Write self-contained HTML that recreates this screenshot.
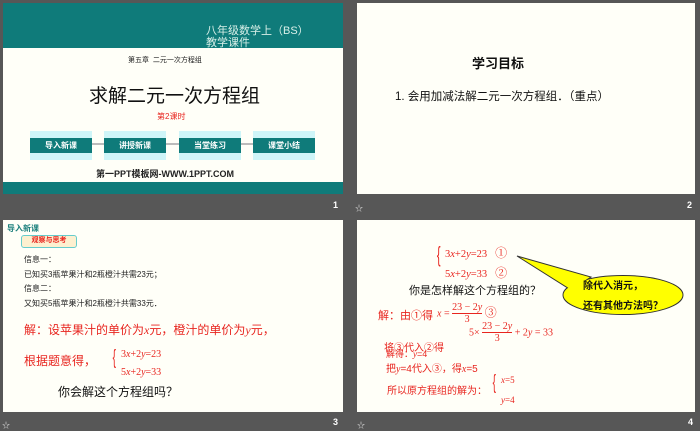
<!DOCTYPE html>
<html><head><meta charset="utf-8"><style>
*{margin:0;padding:0;box-sizing:border-box}
body{width:700px;height:429px;background:#575757;position:relative;overflow:hidden;font-family:"Liberation Sans","Noto Sans CJK SC",sans-serif}
.s{position:absolute;background:#fffff8;overflow:hidden}
.a{position:absolute;white-space:nowrap}
.n{position:absolute;color:#fff;font-size:9px;font-weight:bold}
.st{position:absolute;color:#ddd;font-size:8px}
.btn{position:absolute;top:128px;height:29px;width:62px;background:#cff5f8}
.btn div{position:absolute;left:0;right:0;top:7px;height:15px;background:#0f7b7a;color:#fff;font-size:8px;font-weight:bold;text-align:center;line-height:15px}
.red{color:#e8251f}
.m{font-family:"Liberation Serif","Noto Serif CJK SC",serif}
</style></head><body>
<!-- slide1 -->
<div class="s" style="left:3px;top:3px;width:340px;height:191px">
 <div style="position:absolute;left:0;top:0;width:340px;height:45px;background:#0f7b7a"></div>
 <div class="a" style="left:203px;top:22px;font-size:11px;line-height:12px;color:#d8efe8">八年级数学上（BS）<br>教学课件</div>
 <div class="a" style="left:125px;top:52px;font-size:7px;color:#222">第五章&nbsp; 二元一次方程组</div>
 <div class="a" style="left:86px;top:78px;font-size:19px;color:#111">求解二元一次方程组</div>
 <div class="a red" style="left:154px;top:108px;font-size:8px">第2课时</div>
 <div style="position:absolute;left:80px;top:140px;width:200px;height:2px;background:#bbb"></div>
 <div class="btn" style="left:27px"><div>导入新课</div></div>
 <div class="btn" style="left:101px"><div>讲授新课</div></div>
 <div class="btn" style="left:176px"><div>当堂练习</div></div>
 <div class="btn" style="left:250px"><div>课堂小结</div></div>
 <div class="a" style="left:93px;top:164px;font-size:9px;font-weight:bold;color:#222">第一PPT模板网-WWW.1PPT.COM</div>
 <div style="position:absolute;left:0;top:179px;width:340px;height:12px;background:#0f7b7a"></div>
</div>
<div class="n" style="left:333px;top:200px">1</div>
<!-- slide2 -->
<div class="s" style="left:357px;top:3px;width:338px;height:191px">
 <div class="a" style="left:115px;top:50px;font-size:13px;font-weight:bold;color:#111">学习目标</div>
 <div class="a" style="left:38px;top:85px;font-size:11.5px;color:#111">1. 会用加减法解二元一次方程组．（重点）</div>
</div>
<div class="st" style="left:355px;top:203px">☆</div>
<div class="n" style="left:687px;top:200px">2</div>
<!-- slide3 -->
<div class="s" style="left:3px;top:220px;width:340px;height:192px">
 <div class="a" style="left:4px;top:3px;font-size:8px;font-weight:bold;color:#1a7f7c">导入新课</div>
 <div class="a" style="left:18px;top:15px;width:56px;height:13px;border:1.5px solid #6cc;border-radius:3px;background:#fdf0d0;font-size:7px;font-weight:bold;color:#e8251f;text-align:center;line-height:10px">观察与思考</div>
 <div class="a" style="left:21px;top:33px;font-size:8px;line-height:14.5px;color:#222">信息一：<br>已知买3瓶苹果汁和2瓶橙汁共需23元；<br>信息二：<br>又知买5瓶苹果汁和2瓶橙汁共需33元．</div>
 <div class="a red" style="left:21px;top:101px;font-size:12px">解：设苹果汁的单价为<i class="m">x</i>元，橙汁的单价为<i class="m">y</i>元，</div>
 <div class="a red" style="left:21px;top:132px;font-size:12px">根据题意得，</div>
 <div class="a red" style="left:108px;top:127px;font-size:20px;font-weight:100;transform:scaleX(.5)">{</div>
 <div class="a red m" style="left:118px;top:126px;font-size:10px;line-height:18px">3<i>x</i>+2<i>y</i>=23<br>5<i>x</i>+2<i>y</i>=33</div>
 <div class="a" style="left:55px;top:163px;font-size:12px;color:#111">你会解这个方程组吗？</div>
</div>
<div class="st" style="left:2px;top:420px">☆</div>
<div class="n" style="left:333px;top:417px">3</div>
<!-- slide4 -->
<div class="s" style="left:357px;top:220px;width:338px;height:192px">
 <div class="a red" style="left:78px;top:22px;font-size:22px;transform:scaleX(.5)">{</div>
 <div class="a red m" style="left:88px;top:24px;font-size:10.5px;line-height:19px">3<i>x</i>+2<i>y</i>=23&nbsp;&nbsp;&nbsp;<span style="font-size:12px">①</span><br>5<i>x</i>+2<i>y</i>=33&nbsp;&nbsp;&nbsp;<span style="font-size:12px">②</span></div>
 <svg style="position:absolute;left:0;top:0" width="338" height="192">
  <ellipse cx="266" cy="75" rx="60" ry="19.5" fill="#ffff00" stroke="#333" stroke-width="1"/>
  <path d="M160 36 L234 57 L214 70 Z" fill="#ffff00" stroke="#333" stroke-width="1"/>
  <ellipse cx="266" cy="75" rx="59.3" ry="18.8" fill="#ffff00"/>
 </svg>
 <div class="a" style="left:226px;top:57px;font-size:10px;font-weight:bold;line-height:20px;color:#111">除代入消元，<br>还有其他方法吗？</div>
 <div class="a" style="left:52px;top:62px;font-size:11px;color:#111">你是怎样解这个方程组的？</div>
 <div class="a red" style="left:21px;top:87px;font-size:11px">解：由①得</div>
 <div class="a red m" style="left:80px;top:82px;font-size:10px"><i>x</i> = <span style="display:inline-block;text-align:center;vertical-align:middle;line-height:12px"><span style="border-bottom:1px solid #e8251f">23 − 2<i>y</i></span><br>3</span> <span style="font-size:12px">③</span></div>
 <div class="a red m" style="left:112px;top:101px;font-size:10px">5× <span style="display:inline-block;text-align:center;vertical-align:middle;line-height:12px"><span style="border-bottom:1px solid #e8251f">23 − 2<i>y</i></span><br>3</span> + 2<i>y</i> = 33</div>
 <div class="a red" style="left:27px;top:119px;font-size:10px">将③代入②得</div>
 <div class="a red" style="left:29px;top:127px;font-size:9px">解得：<i class="m">y</i>=4</div>
 <div class="a red" style="left:29px;top:140px;font-size:10px">把<i class="m">y</i>=4代入③，得<i class="m">x</i>=5</div>
 <div class="a red" style="left:30px;top:162px;font-size:10px">所以原方程组的解为：</div>
 <div class="a red" style="left:134px;top:152px;font-size:20px;transform:scaleX(.5)">{</div>
 <div class="a red m" style="left:144px;top:150px;font-size:9px;line-height:20px"><i>x</i>=5<br><i>y</i>=4</div>
</div>
<div class="st" style="left:357px;top:420px">☆</div>
<div class="n" style="left:688px;top:417px">4</div>
</body></html>
